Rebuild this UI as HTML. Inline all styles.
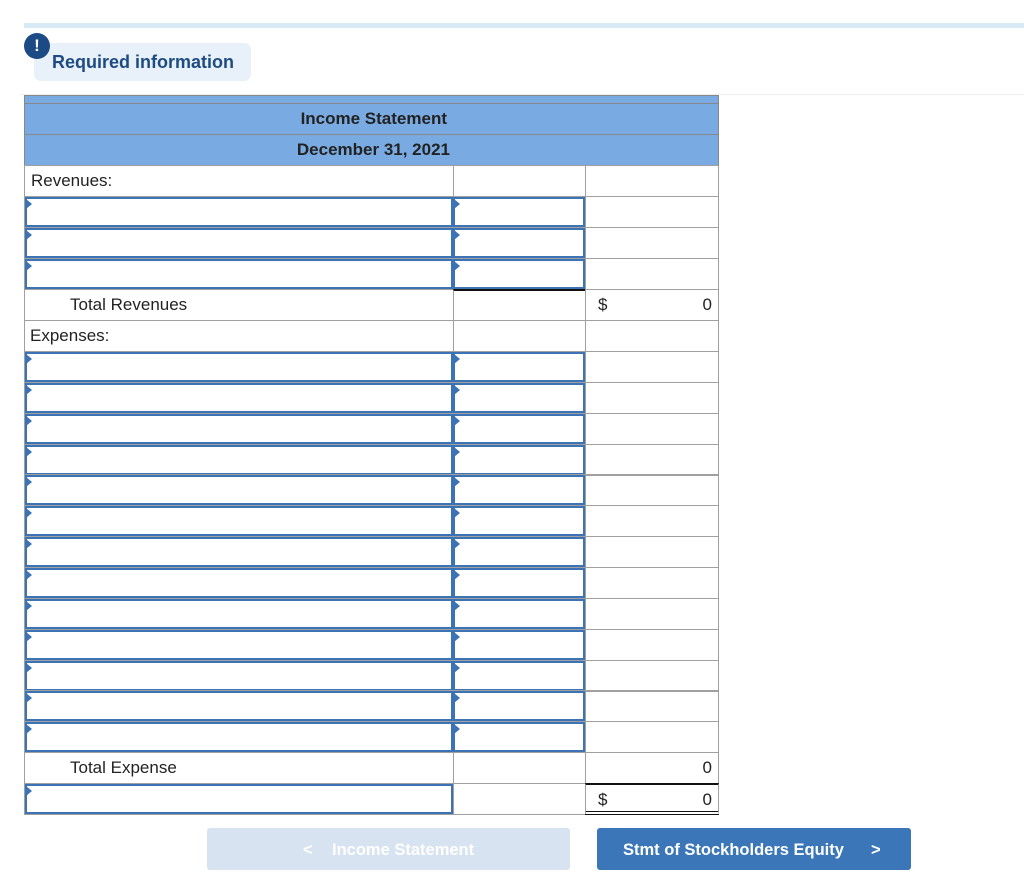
<!DOCTYPE html><html><head><style>
body{margin:0;width:1024px;height:879px;background:#fff;font-family:"Liberation Sans",Arial,sans-serif;position:relative;overflow:hidden}
.a{position:absolute;box-sizing:border-box}
.c{position:absolute;box-sizing:border-box;border:1px solid #a0a0a0;height:32px;font-size:17px;color:#222;line-height:30px}
.in{position:absolute;box-sizing:border-box;border:2px solid #3b73b5;height:30px;background:#fff}
.in:before{content:"";position:absolute;left:-1px;top:0;border-left:6px solid #3b73b5;border-top:5px solid transparent;border-bottom:5px solid transparent}
.btn{position:absolute;top:828px;height:42px;border-radius:3px;font-weight:bold;font-size:16.5px;line-height:44px;color:#fff}
</style></head><body>
<div class="a" style="left:24px;top:23px;width:1000px;height:5px;background:#d9eaf7"></div>
<div class="a" style="left:34px;top:43px;width:217px;height:38px;background:#e8f0f9;border-radius:7px"></div>
<div class="a" style="left:24px;top:33px;width:26px;height:26px;border-radius:50%;background:#1b4a85;color:#fff;font-weight:bold;font-size:17px;text-align:center;line-height:26px">!</div>
<div class="a" style="left:52px;top:52px;font-size:18px;font-weight:bold;color:#1d4b82">Required information</div>
<div class="a" style="left:20px;top:94px;width:1004px;height:1px;background:#eee"></div>
<div class="a" style="left:24px;top:95px;width:695px;height:71px;background:#79abe2;border:1px solid #888"></div>
<div class="a" style="left:24px;top:103px;width:695px;height:1px;background:#888"></div>
<div class="a" style="left:24px;top:134px;width:695px;height:1px;background:#888"></div>
<div class="a" style="left:24px;top:109px;width:429px;text-align:right;font-weight:bold;font-size:17px;color:#222;padding-right:6px">Income Statement</div>
<div class="a" style="left:24px;top:140px;width:429px;text-align:right;font-weight:bold;font-size:17px;color:#222;padding-right:3px">December 31, 2021</div>
<div id="t"></div>
<div class="btn" style="left:207px;width:363px;background:#d7e3f1"><span style="position:absolute;left:96px">&lt;</span><span style="position:absolute;left:125px">Income Statement</span></div>
<div class="btn" style="left:597px;width:314px;background:#3b76b8"><span style="position:absolute;left:26px">Stmt of Stockholders Equity</span><span style="position:absolute;left:274px">&gt;</span></div>
<script>
var h='',tops=[];for(var i=0;i<6;i++)tops.push(165+i*31);
for(var i=0;i<13;i++)tops.push(351+Math.round(i*30.85));
tops.push(752);tops.push(783);
function cell(l,w,t,txt,st){return '<div class="c" style="left:'+l+'px;top:'+t+'px;width:'+w+'px;'+(st||'')+'">'+(txt||'')+'</div>';}
tops.forEach(function(t,i){
 var inp=(i>=1&&i<=3)||(i>=6&&i<=18)||i==20;
 var label='';
 if(i==0)label='<span style="padding-left:6px">Revenues:</span>';
 if(i==4)label='<span style="padding-left:45px">Total Revenues</span>';
 if(i==5)label='<span style="padding-left:5px">Expenses:</span>';
 if(i==19)label='<span style="padding-left:45px">Total Expense</span>';
 h+=cell(24,430,t,label);
 h+=cell(453,133,t,'',i==4?'border-top:2px solid #111':'');
 var c3='';
 if(i==4)c3='<span style="position:absolute;left:12px">$</span><span style="position:absolute;right:6px">0</span>';
 if(i==19)c3='<span style="position:absolute;right:6px">0</span>';
 if(i==20)c3='<span style="position:absolute;left:12px">$</span><span style="position:absolute;right:6px">0</span>';
 h+=cell(585,134,t,c3,i==20?'border-top:2px solid #111;border-bottom:4px double #111':'');
 if(inp){h+='<div class="in" style="left:25px;top:'+(t+1)+'px;width:428px"></div>';
  if(i!=20)h+='<div class="in" style="left:453px;top:'+(t+1)+'px;width:132px"></div>';}
});
document.getElementById('t').innerHTML=h;
</script>
</body></html>
